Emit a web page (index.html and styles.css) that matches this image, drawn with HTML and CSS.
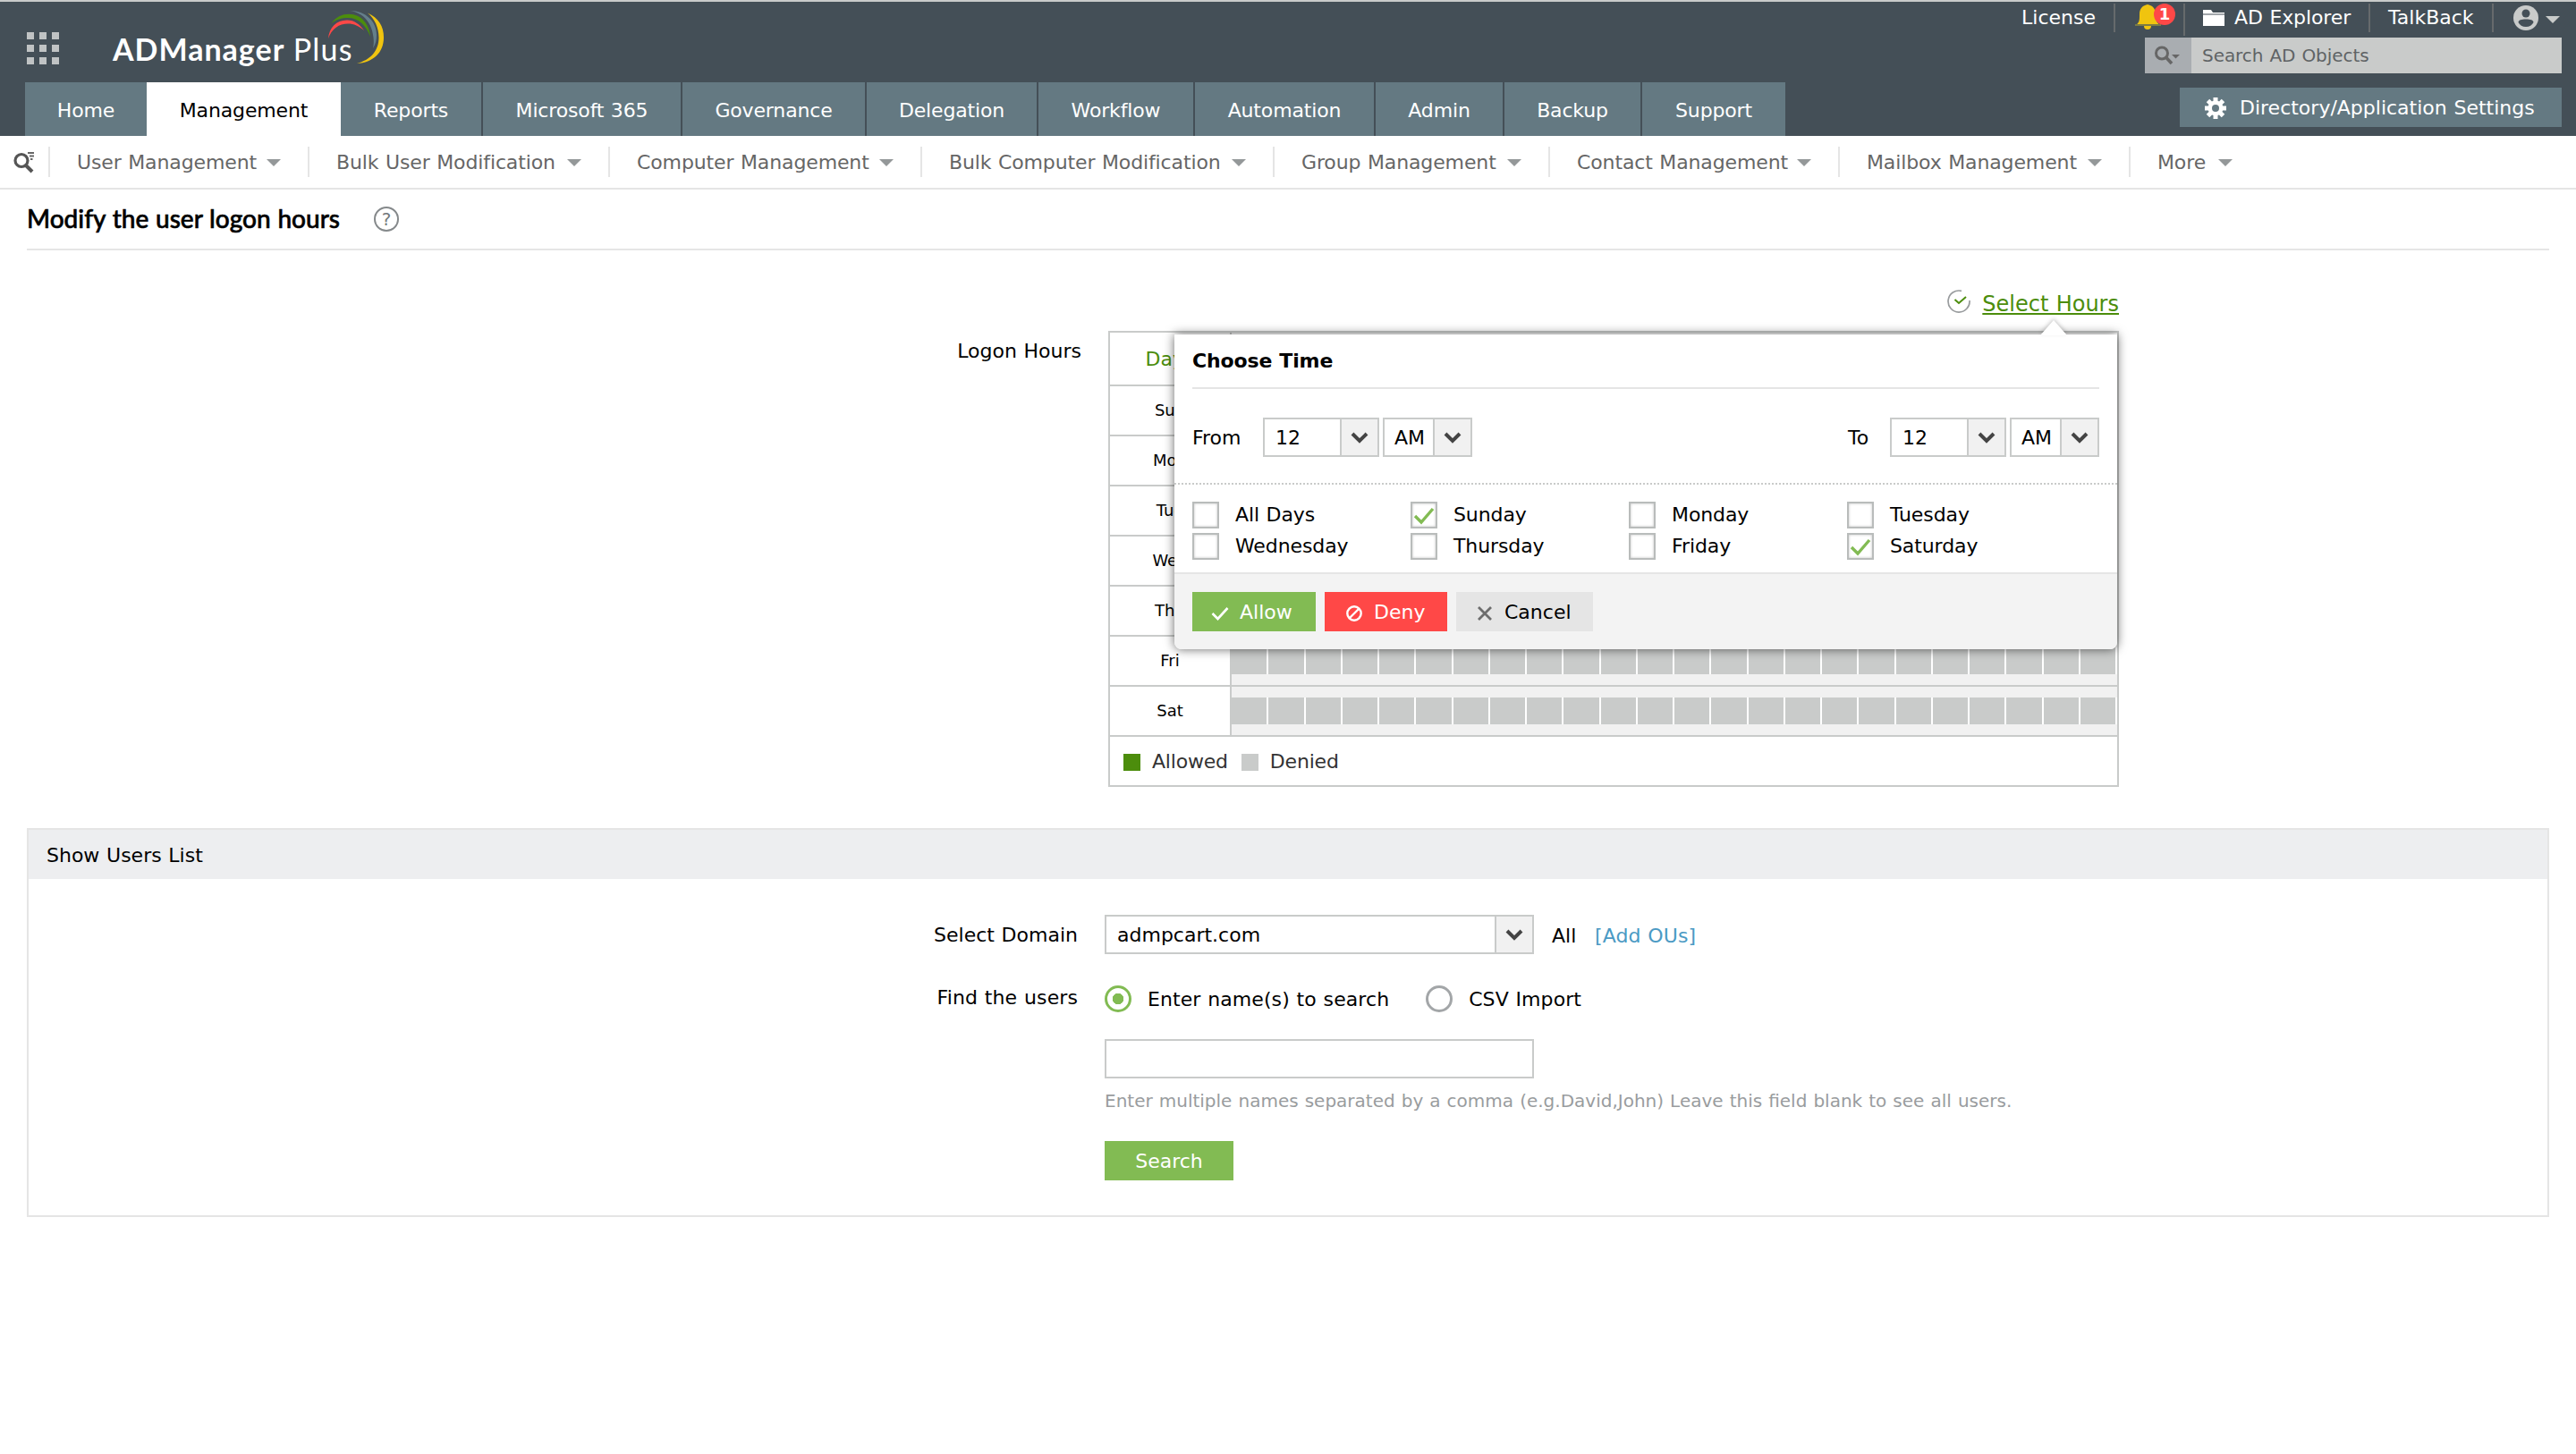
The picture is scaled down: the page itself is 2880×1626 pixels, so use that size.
FILE: index.html
```html
<!DOCTYPE html>
<html lang="en">
<head>
    <meta charset="UTF-8">
    <meta name="viewport" content="width=device-width, initial-scale=1.0">
    <title>ADManager Plus - Modify the user logon hours</title>
    <link rel="stylesheet" href="styles.css">
</head>
<body>

<header class="header">
    <div class="brand">
        <div class="apps">
            <span></span><span></span><span></span>
            <span></span><span></span><span></span>
            <span></span><span></span><span></span>
        </div>
        <div class="logo"><span class="logo-name">ADManager</span> <span class="logo-plus">Plus</span></div>
        <svg class="logo-arcs" width="64" height="64" viewBox="366 10 64 64">
            <path d="M367 43C368 31 376 22.500 388 22.500C396 22.500 402 27 407 34C401 29 396 26.500 389 26.500C379 26.500 371 32 367 43Z" fill="#ff4847"/>
            <path d="M370 26.500C376 19 382 15.800 390 15.800C404 16 413 27 414 41C409 28 401 20 389 20C382 20 376 21.500 370 26.500Z" fill="#4c8d0c"/>
            <path d="M391 12C409 12 421 24 421 39C421 45 420 49 417 54C418 50 418 46 417.500 42C416 26 407 14.500 391 12Z" fill="#647f8b"/>
            <path d="M411 14.500C423 20 429 29 429 42C429 59 417 70 399 71C414 67 423.500 57 423.500 42C423.500 31 419 21 411 14.500Z" fill="#f0c40f"/>
        </svg>
    </div>

    <nav class="tabs">
        <a class="tab tab-home">Home</a>
        <a class="tab tab-management active">Management</a>
        <a class="tab tab-reports">Reports</a>
        <a class="tab tab-m365">Microsoft 365</a>
        <a class="tab tab-governance">Governance</a>
        <a class="tab tab-delegation">Delegation</a>
        <a class="tab tab-workflow">Workflow</a>
        <a class="tab tab-automation">Automation</a>
        <a class="tab tab-admin">Admin</a>
        <a class="tab tab-backup">Backup</a>
        <a class="tab tab-support">Support</a>
    </nav>

    <div class="header-right">
        <div class="top-links">
            <a class="link-license">License</a>
            <a class="link-bell">
                <svg width="30" height="30" viewBox="0 0 30 30">
                    <path d="M14 0C19 1 23 4 23 11C23 18 24 20 28 23H1C5 20 5 18 5 11C5 4 9 1 14 0Z" fill="#f0c40f"/>
                    <path d="M0 22H29V24H0Z" fill="#7c7b45"/>
                    <path d="M10 24H18A4 4 0 0 1 10 24Z" fill="#f0c40f"/>
                </svg>
                <span class="badge">1</span>
            </a>
            <a class="link-explorer">
                <svg width="24" height="18" viewBox="0 0 24 18"><path d="M0 0H9L11 3H24V4.500H0Z M0 5.500H24V18H0Z" fill="#fff"/></svg>
                AD Explorer
            </a>
            <a class="link-talkback">TalkBack</a>
            <a class="link-user">
                <svg width="28" height="28" viewBox="0 0 28 28">
                    <circle cx="14" cy="14" r="14" fill="#c9cbca"/>
                    <circle cx="14" cy="9" r="4.500" fill="#444f57"/>
                    <path d="M5.500 19C5.500 16.500 9 15.500 14 15.500S22.500 16.500 22.500 19C21 22 18 24 14 24S7 22 5.500 19Z" fill="#444f57"/>
                </svg>
                <i class="caret"></i>
            </a>
        </div>
        <div class="ad-search">
            <span class="ad-search-icon">
                <svg width="30" height="22" viewBox="0 0 30 22">
                    <circle cx="8" cy="8.500" r="6.500" fill="none" stroke="#666" stroke-width="3"/>
                    <path d="M12.500 13L19 20" stroke="#666" stroke-width="3.600"/>
                    <path d="M19 10H28L23.500 14.500Z" fill="#666"/>
                </svg>
            </span>
            <span class="ad-search-text">Search AD Objects</span>
        </div>
        <div class="settings">
            <svg width="24" height="24" viewBox="-12 -12 24 24">
                <g fill="#fff">
                    <rect x="-2.500" y="-12" width="5" height="24"/>
                    <rect x="-2.500" y="-12" width="5" height="24" transform="rotate(45)"/>
                    <rect x="-2.500" y="-12" width="5" height="24" transform="rotate(90)"/>
                    <rect x="-2.500" y="-12" width="5" height="24" transform="rotate(135)"/>
                    <circle r="8.500"/>
                </g>
                <circle r="4" fill="#647982"/>
            </svg>
            Directory/Application Settings
        </div>
    </div>
</header>

<nav class="subnav">
    <a class="sub-search">
        <svg width="24" height="24" viewBox="0 0 24 24">
            <circle cx="9" cy="9.500" r="7" fill="none" stroke="#555" stroke-width="3.200"/>
            <path d="M13.500 14.500L21 22" stroke="#555" stroke-width="4"/>
            <path d="M16 1H23M18 4.500H23M19 8H21.500" stroke="#666" stroke-width="1.800"/>
        </svg>
    </a>
    <a class="sub-user">User Management <i class="caret"></i></a>
    <a class="sub-bulk-user">Bulk User Modification <i class="caret"></i></a>
    <a class="sub-computer">Computer Management <i class="caret"></i></a>
    <a class="sub-bulk-computer">Bulk Computer Modification <i class="caret"></i></a>
    <a class="sub-group">Group Management <i class="caret"></i></a>
    <a class="sub-contact">Contact Management <i class="caret"></i></a>
    <a class="sub-mailbox">Mailbox Management <i class="caret"></i></a>
    <a class="sub-more">More <i class="caret"></i></a>
</nav>

<main class="content">
    <div class="page-title">
        <h1>Modify the user logon hours</h1>
        <span class="help">?</span>
    </div>

    <section class="logon">
        <div class="select-hours">
            <svg width="26" height="26" viewBox="0 0 26 26">
                <path d="M16 1.400A12 12 0 1 0 25 12" fill="none" stroke="#999c9e" stroke-width="1.700"/>
                <path d="M8.500 11L13 15L21 8" fill="none" stroke="#4c8d0c" stroke-width="2"/>
            </svg>
            <a>Select Hours</a>
        </div>
        <div class="logon-row">
            <div class="logon-label">Logon Hours</div>
            <div class="hours-wrap">
                <table class="hours">
                    <thead><tr><th>Days</th><td></td></tr></thead>
                    <tbody id="hoursBody"></tbody>
                </table>
                <div class="legend">
                    <i class="swatch allowed"></i>Allowed
                    <i class="swatch"></i>Denied
                </div>

                <div class="popup">
                    <h3>Choose Time</h3>
                    <div class="time-row">
                        <span class="from">From</span>
                        <span class="select hour"><b>12</b><i><svg width="20" height="13"><path d="M2 2L10 10L18 2" /></svg></i></span>
                        <span class="select ampm"><b>AM</b><i><svg width="20" height="13"><path d="M2 2L10 10L18 2" /></svg></i></span>
                        <span class="to">To</span>
                        <span class="select hour"><b>12</b><i><svg width="20" height="13"><path d="M2 2L10 10L18 2" /></svg></i></span>
                        <span class="select ampm"><b>AM</b><i><svg width="20" height="13"><path d="M2 2L10 10L18 2" /></svg></i></span>
                    </div>
                    <div class="days">
                        <label><i class="box"></i>All Days</label>
                        <label><i class="box"><svg width="26" height="26"><path d="M3 14L10 21L23 6"/></svg></i>Sunday</label>
                        <label><i class="box"></i>Monday</label>
                        <label><i class="box"></i>Tuesday</label>
                        <label><i class="box"></i>Wednesday</label>
                        <label><i class="box"></i>Thursday</label>
                        <label><i class="box"></i>Friday</label>
                        <label><i class="box"><svg width="26" height="26"><path d="M3 14L10 21L23 6"/></svg></i>Saturday</label>
                    </div>
                    <div class="popup-buttons">
                        <button class="allow"><svg width="20" height="16"><path d="M1.500 8L7.500 14L18.500 2" fill="none" stroke="#fff" stroke-width="2.600"/></svg>Allow</button>
                        <button class="deny"><svg width="18" height="18"><circle cx="9" cy="9" r="7.700" fill="none" stroke="#fff" stroke-width="2.400"/><path d="M4 14L14 4" stroke="#fff" stroke-width="2.400"/></svg>Deny</button>
                        <button class="cancel"><svg width="16" height="16"><path d="M1 1L15 15M15 1L1 15" stroke="#6d6d6d" stroke-width="2.800"/></svg>Cancel</button>
                    </div>
                </div>
            </div>
        </div>
    </section>

    <section class="panel">
        <h2>Show Users List</h2>
        <div class="panel-body">
            <div class="field field-domain">
                <div class="field-label">Select Domain</div>
                <span class="select domain"><b>admpcart.com</b><i><svg width="20" height="13"><path d="M2 2L10 10L18 2" /></svg></i></span>
                <span class="all">All</span>
                <a class="add-ous">[Add OUs]</a>
            </div>
            <div class="field field-find">
                <div class="field-label">Find the users</div>
                <span class="radio checked"></span><span class="radio-label">Enter name(s) to search</span>
                <span class="radio"></span><span class="radio-label">CSV Import</span>
            </div>
            <div class="field-extra">
                <input type="text" class="names">
                <p class="hint">Enter multiple names separated by a comma (e.g.David,John) Leave this field blank to see all users.</p>
                <button class="search">Search</button>
            </div>
        </div>
    </section>
</main>

<script>
    // one row per day, 24 hour cells each
    const days = ['Sun', 'Mon', 'Tue', 'Wed', 'Thu', 'Fri', 'Sat'];
    document.getElementById('hoursBody').innerHTML = days.map(day => `
        <tr><th>${day}</th><td><div class="cells">${'<span></span>'.repeat(24)}</div></td></tr>
    `).join('');
</script>

</body>
</html>
```
FILE: styles.css
```css
* {
    box-sizing: border-box;
}
body {
    margin: 0;
    background: #fff;
    color: #000;
    font-family: Verdana, "DejaVu Sans", sans-serif;
    font-size: 22px;
    line-height: 28px;
    word-spacing: 0.7px;
}
svg {
    display: block;
    flex: none;
}
i {
    font-style: normal;
}

/* header */
.header {
    display: grid;
    grid-template-columns: 1fr 482px;
    grid-template-rows: 90px 60px;
    height: 152px;
    border-top: 2px solid #c9cbca;
    background: #444f57;
    color: #fff;
}
.brand {
    display: flex;
    align-items: flex-start;
    padding-left: 30px;
}
.apps {
    display: grid;
    grid-template-columns: repeat(3, 8px);
    gap: 6px;
    margin-top: 34px;
    width: 96px;
}
.apps span {
    height: 8px;
    background: #c0c3c4;
}
.logo {
    width: 240px;
    margin-top: 32px;
    font-family: Lato, sans-serif;
    font-size: 34px;
    line-height: 42px;
    white-space: nowrap;
}
.logo-name {
    font-weight: bold;
    letter-spacing: 1px;
}
.logo-plus {
    letter-spacing: 1.2px;
}
.logo-arcs {
    margin-top: 8px;
}
.tabs {
    grid-row: 2;
    display: flex;
    padding-left: 28px;
    letter-spacing: -0.15px;
}
.tab {
    height: 60px;
    padding-top: 1px;
    line-height: 61px;
    text-align: center;
    background: #647982;
    border-right: 2px solid #444f57;
}
.tab.active {
    background: #fff;
    color: #000;
}
.tab-home, .tab-management, .tab-support {
    border-right: 0;
}
.tab-home { width: 136px; }
.tab-management { width: 217px; }
.tab-reports { width: 159px; }
.tab-m365 { width: 223px; }
.tab-governance { width: 206px; }
.tab-delegation { width: 192px; }
.tab-workflow { width: 175px; }
.tab-automation { width: 202px; }
.tab-admin { width: 144px; }
.tab-backup { width: 154px; }
.tab-support { width: 160px; }

.header-right {
    grid-column: 2;
    grid-row: 1 / 3;
    width: 482px;
}
.top-links {
    display: flex;
    justify-content: flex-end;
    height: 40px;
    margin-left: -160px;
    padding: 2px 16px 0 0;
}
.top-links a {
    display: flex;
    align-items: center;
    height: 32px;
    border-right: 2px solid #666a6c;
}
.top-links .link-license {
    padding-right: 20px;
}
.top-links .link-bell {
    position: relative;
    width: 78px;
    height: 36px;
    padding: 0 0 5px 22px;
}
.badge {
    position: absolute;
    left: 43px;
    top: 0;
    width: 24px;
    height: 24px;
    border-radius: 50%;
    background: #ff4847;
    font-size: 18px;
    font-weight: bold;
    line-height: 24px;
    text-align: center;
}
.top-links .link-explorer {
    width: 207px;
    gap: 11px;
    padding-left: 20px;
    letter-spacing: -0.1px;
}
.top-links .link-talkback {
    width: 138px;
    padding-left: 20px;
}
.top-links .link-user {
    width: 76px;
    padding-left: 22px;
    gap: 8px;
    border: 0;
}
.caret {
    border: 8px solid transparent;
    border-top-color: #949899;
    border-bottom: 0;
}
.link-user .caret {
    margin-top: 4px;
    border-top-color: #c9cbca;
}
.ad-search {
    display: flex;
    width: 466px;
    height: 40px;
    background: #c9cbca;
    color: #5f6365;
    font-size: 20px;
    line-height: 41px;
    letter-spacing: -0.05px;
}
.ad-search-icon {
    width: 52px;
    padding: 9px 0 0 11px;
    background: #a9adb1;
}
.ad-search-text {
    padding-left: 12px;
}
.settings {
    display: flex;
    align-items: center;
    gap: 15px;
    width: 427px;
    height: 44px;
    margin: 16px 0 0 39px;
    padding: 1px 0 0 28px;
    background: #647982;
    white-space: nowrap;
}

/* second level menu */
.subnav {
    display: flex;
    align-items: center;
    height: 60px;
    border-bottom: 2px solid #e5e5e5;
    color: #666;
    letter-spacing: -0.12px;
}
.subnav a {
    display: flex;
    align-items: center;
    justify-content: space-between;
    height: 34px;
    padding: 1px 30px 0;
    border-right: 2px solid #e5e5e5;
    white-space: nowrap;
}
.subnav .sub-search {
    width: 56px;
    padding: 2px 0 0 15px;
}
.sub-user { width: 290px; }
.sub-bulk-user { width: 336px; }
.sub-computer { width: 349px; }
.sub-bulk-computer { width: 394px; }
.sub-group { width: 308px; }
.sub-contact { width: 324px; }
.sub-mailbox { width: 325px; }
.sub-more { width: 144px; }
.subnav .sub-more {
    border: 0;
}

/* page title */
.content {
    padding: 0 30px;
}
.page-title {
    display: flex;
    align-items: center;
    height: 68px;
    border-bottom: 2px solid #e5e5e5;
}
h1 {
    width: 388px;
    margin: 0;
    padding-bottom: 2px;
    font-family: Lato, sans-serif;
    font-size: 28px;
    font-weight: 500;
    -webkit-text-stroke: 0.6px #000;
    white-space: nowrap;
}
.help {
    width: 28px;
    height: 28px;
    border: 2px solid #85898b;
    border-radius: 50%;
    color: #75797b;
    font-size: 20px;
    line-height: 24px;
    text-align: center;
}

/* logon hours */
.logon {
    width: 1339px;
    padding-top: 42px;
    margin-left: 1000px;
}
.select-hours {
    display: flex;
    justify-content: flex-end;
    gap: 13px;
    height: 48px;
    font-size: 24px;
    line-height: 36px;
    color: #4c8d0c;
}
.select-hours svg {
    margin-top: 2px;
}
.select-hours a {
    text-decoration: underline;
    text-decoration-thickness: 2px;
    text-underline-offset: 2px;
}
.logon-row {
    display: flex;
}
.logon-label {
    width: 209px;
    padding: 9px 30px 0 0;
    text-align: right;
}
.hours-wrap {
    position: relative;
    width: 1130px;
    height: 510px;
    border: 2px solid #c9cbca;
}
.hours {
    width: 1126px;
    border-spacing: 0;
    table-layout: fixed;
}
.hours th, .hours td {
    height: 56px;
    padding: 0;
    border-bottom: 2px solid #c9cbca;
}
.hours th {
    width: 136px;
    border-right: 2px solid #c9cbca;
    font-size: 18px;
    font-weight: normal;
}
.hours thead th {
    height: 60px;
    padding-top: 1px;
    font-size: 22px;
    color: #4c8d0c;
}
.hours tbody td {
    background: #f1f1f1;
}
.cells {
    display: grid;
    grid-template-columns: repeat(24, 1fr);
}
.cells span {
    height: 30px;
    background: #c9cbca;
    border-right: 2px solid #fff;
}
.legend {
    display: flex;
    align-items: center;
    height: 54px;
    padding: 2px 0 0 15px;
    color: #333;
    letter-spacing: -0.2px;
}
.swatch {
    width: 19px;
    height: 19px;
    margin: 0 13px 0 15px;
    background: #c9cbca;
}
.swatch.allowed {
    margin-left: 0;
    background: #4c8d0c;
}

/* choose time popup */
.popup {
    position: absolute;
    top: 2px;
    right: 0;
    width: 1054px;
    height: 352px;
    background: #fff;
    border-radius: 0 0 8px 8px;
    box-shadow: 0 0 12px rgba(0, 0, 0, 0.6);
}
.popup::before {
    content: "";
    position: absolute;
    top: -16px;
    right: 56px;
    border: 15px solid transparent;
    border-top: 0;
    border-bottom: 17px solid #fff;
    filter: drop-shadow(0 -2px 2px rgba(0, 0, 0, 0.2));
}
.popup h3 {
    margin: 0 20px;
    height: 61px;
    padding-top: 16px;
    border-bottom: 2px solid #e5e5e5;
    font-size: 22px;
    letter-spacing: -0.15px;
}
.time-row {
    display: flex;
    align-items: center;
    height: 107px;
    padding: 3px 20px 0;
    border-bottom: 2px dotted #c9cbca;
}
.from {
    width: 79px;
}
.to {
    margin-left: auto;
    width: 47px;
}
.from, .to {
    padding-top: 1px;
}
.select {
    display: flex;
    height: 44px;
    border: 2px solid #c9cbca;
    background: #fff;
}
.select b {
    flex: 1;
    padding-left: 12px;
    font-weight: normal;
    line-height: 41px;
}
.select i {
    display: flex;
    align-items: center;
    justify-content: center;
    width: 42px;
    border-left: 2px solid #c9cbca;
    background: #f1f1f1;
}
.select path {
    fill: none;
    stroke: #444;
    stroke-width: 4;
}
.select.hour {
    width: 130px;
}
.select.ampm {
    width: 100px;
    margin-left: 4px;
}
.select.ampm b {
    padding-left: 11px;
}
.days {
    display: grid;
    grid-template-columns: repeat(4, 244px);
    grid-auto-rows: 30px;
    row-gap: 5px;
    height: 98px;
    padding: 19px 0 0 20px;
    letter-spacing: -0.1px;
}
.days label {
    display: flex;
    align-items: center;
    gap: 18px;
    line-height: 32px;
}
.box {
    width: 30px;
    height: 30px;
    border: 2px solid #b9bcbb;
    box-shadow: inset 0 0 3px rgba(0, 0, 0, 0.25);
}
.box path {
    fill: none;
    stroke: #82bb53;
    stroke-width: 3.4;
}
.popup-buttons {
    display: flex;
    gap: 10px;
    height: 86px;
    padding: 20px;
    border-top: 2px solid #e5e5e5;
    border-radius: 0 0 8px 8px;
    background: #f3f3f3;
}
button {
    display: flex;
    align-items: center;
    height: 44px;
    padding: 1px 0 0;
    border: 0;
    font: inherit;
    color: #fff;
}
.allow {
    width: 138px;
    gap: 12px;
    padding-left: 21px;
    background: #82bb53;
}
.deny {
    width: 137px;
    gap: 13px;
    padding-left: 24px;
    background: #ff4847;
}
.cancel {
    width: 153px;
    gap: 14px;
    padding-left: 24px;
    background: #e5e5e5;
    color: #000;
}
.popup-buttons svg {
    margin-top: 2px;
}

/* users list */
.panel {
    margin-top: 46px;
    height: 435px;
    border: 2px solid #e5e5e5;
}
.panel h2 {
    margin: 0;
    height: 55px;
    padding-left: 20px;
    background: #edeef0;
    font-size: 22px;
    font-weight: normal;
    line-height: 57px;
}
.panel-body {
    padding: 40px 0 0 1003px;
}
.field {
    display: flex;
    align-items: center;
    height: 44px;
}
.field-label {
    width: 200px;
    padding: 1px 30px 0 0;
    text-align: right;
    white-space: nowrap;
}
.select.domain {
    width: 480px;
}
.all {
    width: 48px;
    margin-left: 20px;
}
.all, .add-ous {
    padding-top: 3px;
}
.add-ous {
    color: #4b9ac4;
    letter-spacing: 0.1px;
}
.field-find {
    margin-top: 28px;
}
.field-find .field-label {
    padding-bottom: 4px;
    letter-spacing: 0.1px;
}
.radio {
    width: 30px;
    height: 30px;
    margin-right: 18px;
    border: 3px solid #a3a6a8;
    border-radius: 50%;
}
.radio.checked {
    border-color: #82bb53;
    background: radial-gradient(circle, #82bb53 6px, #fff 6.5px);
}
.radio-label {
    margin-right: 41px;
    padding-top: 1px;
    letter-spacing: 0.08px;
}
.field-extra {
    padding: 23px 0 0 200px;
}
.names {
    display: block;
    width: 480px;
    height: 44px;
    border: 2px solid #c9cbca;
}
.hint {
    margin: 11px 0 31px;
    color: #999c9e;
    font-size: 20px;
}
.search {
    width: 144px;
    justify-content: center;
    background: #82bb53;
}
```
